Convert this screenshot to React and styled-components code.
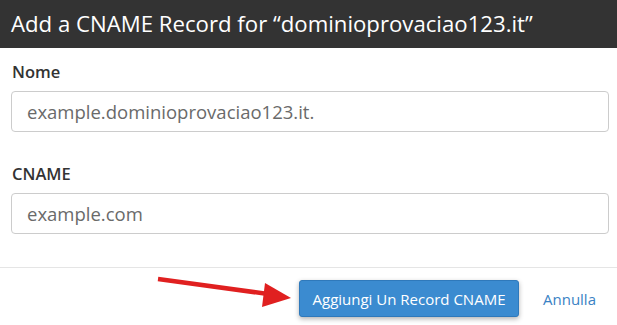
import styled, { createGlobalStyle } from "styled-components";

const GlobalStyle = createGlobalStyle`
  html, body {
    margin: 0;
    padding: 0;
    background: #fff;
  }
  body {
    font-family: "Open Sans", "Liberation Sans", Arial, sans-serif;
    color: #333;
  }
`;

const Modal = styled.div`
  position: relative;
  width: 617px;
  height: 325px;
  overflow: hidden;
  background: #fff;
`;

const Header = styled.div`
  height: 48px;
  background: #333;
  display: flex;
  align-items: center;
  padding: 0 11px;
  box-sizing: border-box;
`;

const Title = styled.h3`
  margin: 0;
  color: #fff;
  font-size: 22.2px;
  font-weight: 400;
  line-height: 1;
  white-space: nowrap;
`;

const Body = styled.div`
  padding: 13px 8px 33px 11px;
  display: flex;
  flex-direction: column;
  gap: 31px;
`;

const Field = styled.div`
  display: flex;
  flex-direction: column;
`;

const Label = styled.label`
  font-size: 16.5px;
  font-weight: 600;
  color: #333;
  line-height: 22px;
  padding-left: 1px;
  margin-bottom: 8px;
`;

const Input = styled.input`
  height: 41px;
  box-sizing: border-box;
  border: 1px solid #ccc;
  border-radius: 4px;
  padding: 0 15px;
  font-family: inherit;
  font-size: 18.5px;
  color: #555;
  background: #fff;
  outline: none;

  &::placeholder {
    color: #6a6a6a;
  }
`;

const Footer = styled.div`
  border-top: 1px solid #e5e5e5;
  display: flex;
  justify-content: flex-end;
  align-items: center;
  gap: 24px;
  padding: 12px 21px 0 0;
`;

const PrimaryButton = styled.button`
  width: 220px;
  height: 37px;
  background: #3b8bd0;
  border: 1px solid #2f79bb;
  border-radius: 3px;
  color: #fff;
  font-family: inherit;
  font-size: 15px;
  box-shadow: 0 2px 5px rgba(0, 0, 0, 0.3);
  cursor: pointer;
`;

const CancelLink = styled.a`
  color: #3a82c4;
  font-size: 15px;
  text-decoration: none;
  cursor: pointer;
`;

const Arrow = styled.svg`
  position: absolute;
  left: 150px;
  top: 270px;
  pointer-events: none;
`;

export default function App() {
  return (
    <>
      <GlobalStyle />
      <Modal>
        <Header>
          <Title>Add a CNAME Record for “dominioprovaciao123.it”</Title>
        </Header>
        <Body>
          <Field>
            <Label>Nome</Label>
            <Input placeholder="example.dominioprovaciao123.it." />
          </Field>
          <Field>
            <Label>CNAME</Label>
            <Input placeholder="example.com" />
          </Field>
        </Body>
        <Footer>
          <PrimaryButton>Aggiungi Un Record CNAME</PrimaryButton>
          <CancelLink>Annulla</CancelLink>
        </Footer>
        {/* red annotation arrow pointing at the submit button */}
        <Arrow width="150" height="45" viewBox="0 0 150 45">
          <line x1="8" y1="9" x2="118" y2="24" stroke="#e02020" strokeWidth="4.5" />
          <polygon points="141,28 115,13 112,37" fill="#e02020" />
        </Arrow>
      </Modal>
    </>
  );
}
